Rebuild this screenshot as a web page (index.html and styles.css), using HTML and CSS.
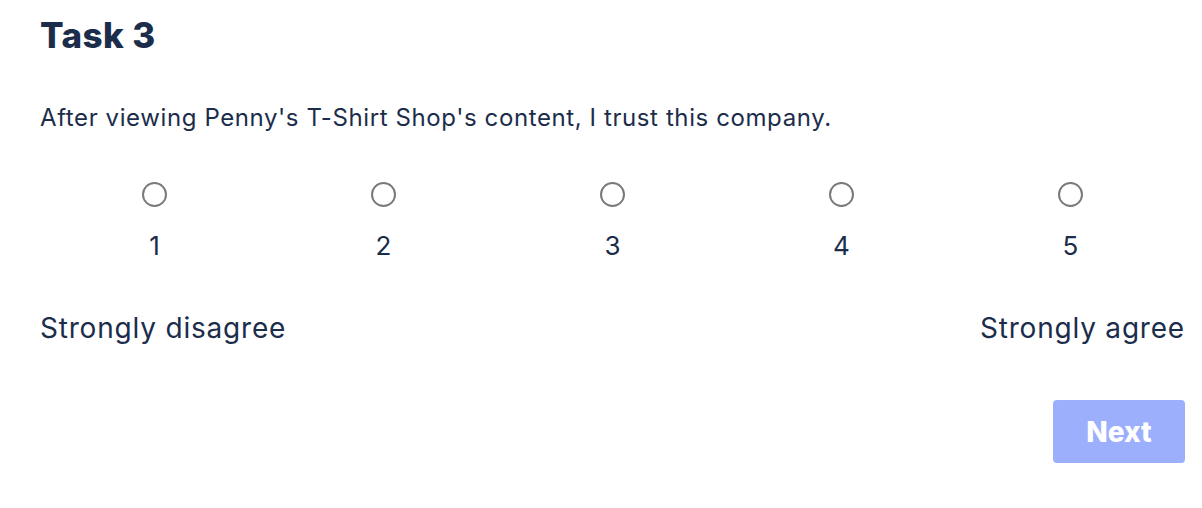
FILE: index.html
```html
<!DOCTYPE html>
<html lang="en">
<head>
<meta charset="utf-8">
<title>Task 3</title>
<link rel="stylesheet" href="styles.css">
</head>
<body>
<main class="task">
  <h1 class="task-title">Task 3</h1>
  <p class="question">After viewing Penny's T-Shirt Shop's content, I trust this company.</p>
  <div class="scale">
    <label class="option"><input type="radio" name="trust" value="1"><span class="num">1</span></label>
    <label class="option"><input type="radio" name="trust" value="2"><span class="num">2</span></label>
    <label class="option"><input type="radio" name="trust" value="3"><span class="num">3</span></label>
    <label class="option"><input type="radio" name="trust" value="4"><span class="num">4</span></label>
    <label class="option"><input type="radio" name="trust" value="5"><span class="num">5</span></label>
  </div>
  <div class="anchors">
    <span>Strongly disagree</span>
    <span>Strongly agree</span>
  </div>
  <div class="actions">
    <button class="next" type="button" disabled>Next</button>
  </div>
</main>
</body>
</html>
```

FILE: styles.css
```css
* { box-sizing: border-box; }
html, body { margin: 0; padding: 0; background: #fff; }
body {
  font-family: Inter, "Noto Sans", sans-serif;
  color: #1b2d4b;
}
.task {
  width: 1145px;
  margin-left: 40px;
  padding-top: 15px;
}
.task-title {
  margin: 0;
  font-size: 35px;
  font-weight: 800;
  line-height: 40px;
  letter-spacing: 0.4px;
}
.question {
  margin: 48px 0 0;
  font-size: 24px;
  line-height: 30px;
  letter-spacing: 0.6px;
}
.scale {
  display: grid;
  grid-template-columns: repeat(5, 1fr);
  margin-top: 49px;
}
.option {
  display: flex;
  flex-direction: column;
  align-items: center;
}
.option input {
  appearance: none;
  -webkit-appearance: none;
  width: 25px;
  height: 25px;
  margin: 0;
  border: 2px solid #7a7a7a;
  border-radius: 50%;
  background: #fff;
}
.num {
  margin-top: 24px;
  font-size: 26px;
  line-height: 30px;
}
.anchors {
  display: flex;
  justify-content: space-between;
  margin-top: 49px;
  font-size: 28px;
  line-height: 36px;
  letter-spacing: 0.8px;
}
.actions {
  display: flex;
  justify-content: flex-end;
  margin-top: 54px;
}
.next {
  width: 132px;
  height: 63px;
  border: none;
  border-radius: 4px;
  background: #9caffd;
  color: #fff;
  font-family: Inter, "Noto Sans", sans-serif;
  font-size: 28px;
  font-weight: 800;
}
```
